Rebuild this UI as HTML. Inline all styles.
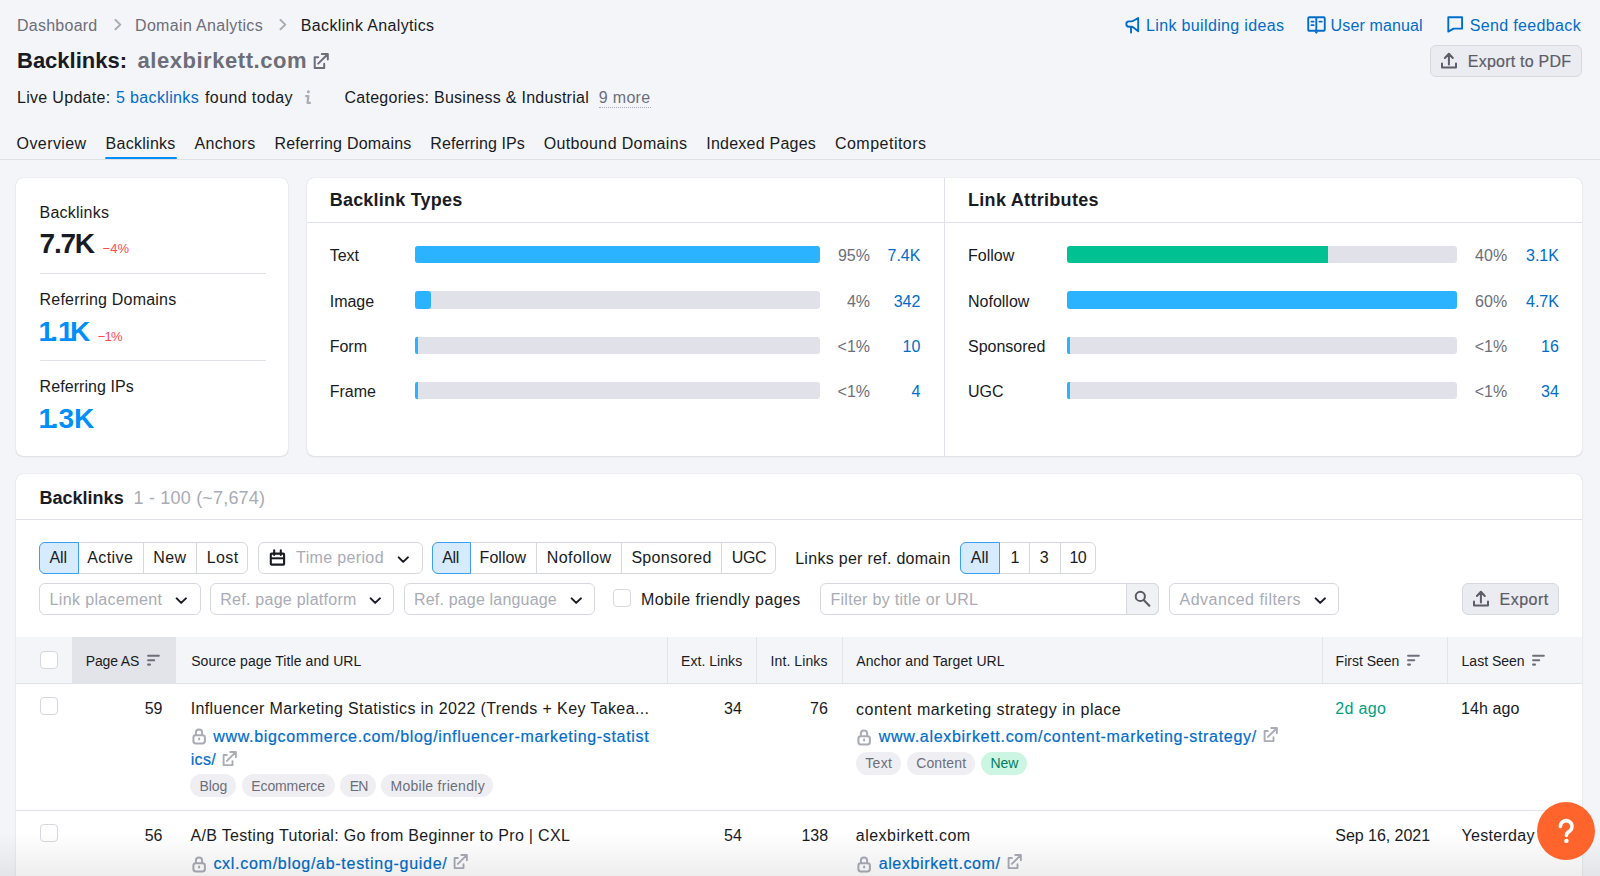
<!DOCTYPE html>
<html><head><meta charset="utf-8"><title>Backlinks: alexbirkett.com</title>
<style>
html,body{margin:0;padding:0;}
body{width:1600px;height:876px;overflow:hidden;position:relative;background:#f4f5f9;font-family:"Liberation Sans",sans-serif;}
.t{position:absolute;white-space:nowrap;}
</style></head><body>
<div style="position:absolute;left:598.5px;top:107px;width:52.5px;height:0px;border-top:1px dotted #a9abb6"></div>
<div style="position:absolute;left:1430px;top:45px;width:152px;height:32px;box-sizing:border-box;background:#ebecf1;border:1px solid #d6d8e0;border-radius:6px"></div>
<div style="position:absolute;left:0px;top:159px;width:1600px;height:1px;background:#dfe0e6"></div>
<div style="position:absolute;left:104.5px;top:157px;width:72px;height:2px;background:#008ff8;border-radius:1px"></div>
<div style="position:absolute;left:16px;top:178px;width:272px;height:278px;background:#fff;border-radius:7px;box-shadow:0 0 1px rgba(25,27,35,0.22),0 1px 2px rgba(25,27,35,0.08)"></div>
<div style="position:absolute;left:39.5px;top:273px;width:226.5px;height:1px;background:#e0e1e9"></div>
<div style="position:absolute;left:39.5px;top:360px;width:226.5px;height:1px;background:#e0e1e9"></div>
<div style="position:absolute;left:307px;top:178px;width:1275px;height:278px;background:#fff;border-radius:7px;box-shadow:0 0 1px rgba(25,27,35,0.22),0 1px 2px rgba(25,27,35,0.08)"></div>
<div style="position:absolute;left:944px;top:178px;width:1px;height:278px;background:#e0e1e9"></div>
<div style="position:absolute;left:307px;top:222px;width:1275px;height:1px;background:#e0e1e9"></div>
<div style="position:absolute;left:415.2px;top:246.0px;width:405.1px;height:17.4px;background:#e0e1e9;border-radius:3px"></div>
<div style="position:absolute;left:415.2px;top:246.0px;width:405.1px;height:17.4px;background:#2bb3ff;border-radius:3px"></div>
<div style="position:absolute;left:415.2px;top:291.33px;width:405.1px;height:17.4px;background:#e0e1e9;border-radius:3px"></div>
<div style="position:absolute;left:415.2px;top:291.33px;width:16.3px;height:17.4px;background:#2bb3ff;border-radius:3px"></div>
<div style="position:absolute;left:415.2px;top:336.66px;width:405.1px;height:17.4px;background:#e0e1e9;border-radius:3px"></div>
<div style="position:absolute;left:415.2px;top:336.66px;width:3px;height:17.4px;background:#2bb3ff;border-radius:2px 0 0 2px"></div>
<div style="position:absolute;left:415.2px;top:381.99px;width:405.1px;height:17.4px;background:#e0e1e9;border-radius:3px"></div>
<div style="position:absolute;left:415.2px;top:381.99px;width:3px;height:17.4px;background:#2bb3ff;border-radius:2px 0 0 2px"></div>
<div style="position:absolute;left:1067px;top:246.0px;width:389.7px;height:17.4px;background:#e0e1e9;border-radius:3px"></div>
<div style="position:absolute;left:1067px;top:246.0px;width:261px;height:17.4px;background:#00c192;border-radius:3px 0 0 3px"></div>
<div style="position:absolute;left:1067px;top:291.33px;width:389.7px;height:17.4px;background:#e0e1e9;border-radius:3px"></div>
<div style="position:absolute;left:1067px;top:291.33px;width:389.7px;height:17.4px;background:#2bb3ff;border-radius:3px"></div>
<div style="position:absolute;left:1067px;top:336.66px;width:389.7px;height:17.4px;background:#e0e1e9;border-radius:3px"></div>
<div style="position:absolute;left:1067px;top:336.66px;width:3px;height:17.4px;background:#2bb3ff;border-radius:2px 0 0 2px"></div>
<div style="position:absolute;left:1067px;top:381.99px;width:389.7px;height:17.4px;background:#e0e1e9;border-radius:3px"></div>
<div style="position:absolute;left:1067px;top:381.99px;width:3px;height:17.4px;background:#2bb3ff;border-radius:2px 0 0 2px"></div>
<div style="position:absolute;left:16px;top:474px;width:1566px;height:500px;background:#fff;border-radius:7px;box-shadow:0 0 1px rgba(25,27,35,0.22),0 1px 2px rgba(25,27,35,0.08)"></div>
<div style="position:absolute;left:16px;top:519px;width:1566px;height:1px;background:#e0e1e9"></div>
<div style="position:absolute;left:39px;top:542px;width:209.3px;height:32px;box-sizing:border-box;border:1px solid #d6d8df;border-radius:6px;background:#fff"></div>
<div style="position:absolute;left:77.6px;top:543px;width:1px;height:30px;background:#d6d8df"></div>
<div style="position:absolute;left:143.4px;top:543px;width:1px;height:30px;background:#d6d8df"></div>
<div style="position:absolute;left:196.3px;top:543px;width:1px;height:30px;background:#d6d8df"></div>
<div style="position:absolute;left:39px;top:542px;width:39.599999999999994px;height:32px;box-sizing:border-box;background:#d7ebfe;border:1px solid #3a9ff5;border-radius:6px 0 0 6px"></div>
<div style="position:absolute;left:258px;top:542px;width:164.5px;height:32px;box-sizing:border-box;border:1px solid #d6d8df;border-radius:6px;background:#fff"></div>
<div style="position:absolute;left:431.5px;top:542px;width:344.79999999999995px;height:32px;box-sizing:border-box;border:1px solid #d6d8df;border-radius:6px;background:#fff"></div>
<div style="position:absolute;left:469.7px;top:543px;width:1px;height:30px;background:#d6d8df"></div>
<div style="position:absolute;left:536.4px;top:543px;width:1px;height:30px;background:#d6d8df"></div>
<div style="position:absolute;left:621.3px;top:543px;width:1px;height:30px;background:#d6d8df"></div>
<div style="position:absolute;left:721.4px;top:543px;width:1px;height:30px;background:#d6d8df"></div>
<div style="position:absolute;left:431.5px;top:542px;width:39.19999999999999px;height:32px;box-sizing:border-box;background:#d7ebfe;border:1px solid #3a9ff5;border-radius:6px 0 0 6px"></div>
<div style="position:absolute;left:960.3px;top:542px;width:136.0px;height:32px;box-sizing:border-box;border:1px solid #d6d8df;border-radius:6px;background:#fff"></div>
<div style="position:absolute;left:998.6px;top:543px;width:1px;height:30px;background:#d6d8df"></div>
<div style="position:absolute;left:1029.3px;top:543px;width:1px;height:30px;background:#d6d8df"></div>
<div style="position:absolute;left:1059.8px;top:543px;width:1px;height:30px;background:#d6d8df"></div>
<div style="position:absolute;left:960.3px;top:542px;width:39.30000000000007px;height:32px;box-sizing:border-box;background:#d7ebfe;border:1px solid #3a9ff5;border-radius:6px 0 0 6px"></div>
<div style="position:absolute;left:39px;top:583px;width:161.5px;height:31.5px;box-sizing:border-box;border:1px solid #d6d8df;border-radius:6px;background:#fff"></div>
<div style="position:absolute;left:209.8px;top:583px;width:184.7px;height:31.5px;box-sizing:border-box;border:1px solid #d6d8df;border-radius:6px;background:#fff"></div>
<div style="position:absolute;left:404.1px;top:583px;width:190.79999999999995px;height:31.5px;box-sizing:border-box;border:1px solid #d6d8df;border-radius:6px;background:#fff"></div>
<div style="position:absolute;left:613px;top:589px;width:18px;height:18px;box-sizing:border-box;border:1px solid #d6d8df;border-radius:4px;background:#fff"></div>
<div style="position:absolute;left:819.9px;top:583px;width:339.4px;height:31.5px;box-sizing:border-box;border:1px solid #d6d8df;border-radius:6px;background:#fff"></div>
<div style="position:absolute;left:1125.9px;top:583px;width:33.4px;height:31.5px;box-sizing:border-box;border:1px solid #d6d8df;border-radius:0 6px 6px 0;background:#f0f1f4"></div>
<div style="position:absolute;left:1169.1px;top:583px;width:169.60000000000014px;height:31.5px;box-sizing:border-box;border:1px solid #d6d8df;border-radius:6px;background:#fff"></div>
<div style="position:absolute;left:1462px;top:583px;width:97.2px;height:31.5px;box-sizing:border-box;background:#ebecf1;border:1px solid #d6d8e0;border-radius:6px"></div>
<div style="position:absolute;left:16px;top:637px;width:1566px;height:46px;background:#f4f5f9"></div>
<div style="position:absolute;left:72px;top:637px;width:104px;height:46px;background:#e3e4ea"></div>
<div style="position:absolute;left:16px;top:683px;width:1566px;height:1px;background:#e0e1e9"></div>
<div style="position:absolute;left:667.3px;top:637px;width:1px;height:46px;background:#e3e4ea"></div>
<div style="position:absolute;left:756.4px;top:637px;width:1px;height:46px;background:#e3e4ea"></div>
<div style="position:absolute;left:842px;top:637px;width:1px;height:46px;background:#e3e4ea"></div>
<div style="position:absolute;left:1321.5px;top:637px;width:1px;height:46px;background:#e3e4ea"></div>
<div style="position:absolute;left:1447.2px;top:637px;width:1px;height:46px;background:#e3e4ea"></div>
<div style="position:absolute;left:39.5px;top:651px;width:18px;height:18px;box-sizing:border-box;border:1px solid #d6d8df;border-radius:4px;background:#fff"></div>
<div style="position:absolute;left:39.5px;top:697px;width:18px;height:18px;box-sizing:border-box;border:1px solid #d6d8df;border-radius:4px;background:#fff"></div>
<div style="position:absolute;left:190.1px;top:774.1px;width:46.099999999999994px;height:23px;background:#efeff3;border-radius:11.5px"></div>
<div style="position:absolute;left:241.8px;top:774.1px;width:92.80000000000001px;height:23px;background:#efeff3;border-radius:11.5px"></div>
<div style="position:absolute;left:340.3px;top:774.1px;width:35.69999999999999px;height:23px;background:#efeff3;border-radius:11.5px"></div>
<div style="position:absolute;left:381px;top:774.1px;width:112.39999999999998px;height:23px;background:#efeff3;border-radius:11.5px"></div>
<div style="position:absolute;left:855.8px;top:751.9px;width:45.40000000000009px;height:23px;background:#efeff3;border-radius:11.5px"></div>
<div style="position:absolute;left:906.7px;top:751.9px;width:68.69999999999993px;height:23px;background:#efeff3;border-radius:11.5px"></div>
<div style="position:absolute;left:980.9px;top:751.9px;width:46.30000000000007px;height:23px;background:#cdf6e2;border-radius:11.5px"></div>
<div style="position:absolute;left:16px;top:810px;width:1566px;height:1px;background:#e0e1e9"></div>
<div style="position:absolute;left:39.5px;top:824px;width:18px;height:18px;box-sizing:border-box;border:1px solid #d6d8df;border-radius:4px;background:#fff"></div>
<svg style="position:absolute;left:113.5px;top:19px" width="8" height="12" viewBox="0 0 8 12" fill="none"><path d="M1.5 1 L6.3 5.6 L1.5 10.3" stroke="#a9abb6" stroke-width="2" stroke-linecap="round" stroke-linejoin="round"/></svg>
<svg style="position:absolute;left:279px;top:19px" width="8" height="12" viewBox="0 0 8 12" fill="none"><path d="M1.5 1 L6.3 5.6 L1.5 10.3" stroke="#a9abb6" stroke-width="2" stroke-linecap="round" stroke-linejoin="round"/></svg>
<svg style="position:absolute;left:313px;top:53px" width="16" height="16" viewBox="0 0 16 16" fill="none"><path d="M5.2 4.2 H1.7 V15 H11.2 V10.8" stroke="#6c6e79" stroke-width="2" stroke-linecap="round" stroke-linejoin="round"/><path d="M8.8 1 H14.8 V6.6 M14.6 1.2 L5.2 10.6" stroke="#6c6e79" stroke-width="2" stroke-linecap="round" stroke-linejoin="round"/></svg>
<svg style="position:absolute;left:303px;top:89px" width="10" height="16" viewBox="0 0 10 16" fill="none"><circle cx="5.4" cy="2.7" r="1.5" fill="#a9abb6"/><path d="M2.2 7.1 H5.4 L4.5 13.9 H7.8" stroke="#a9abb6" stroke-width="2.2" stroke-linejoin="round"/></svg>
<svg style="position:absolute;left:1124px;top:16px" width="16" height="18" viewBox="0 0 16 18" fill="none"><path d="M14.2 2 V15.2 L9.4 11.6 Q8.6 10.7 7.6 10.7 H4.95 A2.65 2.65 0 0 1 4.95 5.4 H7.6 Q8.6 5.4 9.4 4.8 Z" stroke="#006dca" stroke-width="1.9" stroke-linejoin="round"/><path d="M6.9 11.2 L7.1 16.6" stroke="#006dca" stroke-width="1.9" stroke-linecap="round"/></svg>
<svg style="position:absolute;left:1307px;top:16px" width="19" height="19" viewBox="0 0 19 19" fill="none"><rect x="1.25" y="1.25" width="16.5" height="13.5" rx="1" stroke="#006dca" stroke-width="1.9"/><path d="M9.3 1.25 V14.75" stroke="#006dca" stroke-width="1.9"/><path d="M7.3 15.5 L9.3 17.9 L11.3 15.5 Z" fill="#006dca"/><path d="M4.4 5.6 H6.7 M4.4 9.2 H6.7 M12.4 5.6 H14.8" stroke="#006dca" stroke-width="1.8" stroke-linecap="round"/></svg>
<svg style="position:absolute;left:1447px;top:16px" width="17" height="18" viewBox="0 0 17 18" fill="none"><path d="M1.3 15.6 V1.3 H15.1 V12.6 H6.5 Z" stroke="#006dca" stroke-width="1.9" stroke-linejoin="round"/></svg>
<svg style="position:absolute;left:1440px;top:52px" width="17" height="17" viewBox="0 0 17 17" fill="none"><path d="M8.9 12.4 V2 M4.9 6 L8.9 1.8 L12.8 6" stroke="#5b5d68" stroke-width="2" stroke-linecap="round" stroke-linejoin="round"/><path d="M2 11.6 V15.4 H16 V11.6" stroke="#5b5d68" stroke-width="2" stroke-linecap="round" stroke-linejoin="round"/></svg>
<svg style="position:absolute;left:269px;top:549px" width="17" height="17" viewBox="0 0 17 17" fill="none"><rect x="1.8" y="4.6" width="13.3" height="11" rx="0.8" stroke="#191b23" stroke-width="2.1"/><path d="M1.8 9.3 H15.1" stroke="#191b23" stroke-width="2"/><path d="M5.2 1.4 V6 M11.8 1.4 V6" stroke="#191b23" stroke-width="2.1" stroke-linecap="round"/></svg>
<svg style="position:absolute;left:397px;top:555.5px" width="12" height="8" viewBox="0 0 12 8" fill="none"><path d="M1.7 1.4 L6.2 5.9 L10.9 1.4" stroke="#191b23" stroke-width="2" stroke-linecap="round" stroke-linejoin="round"/></svg>
<svg style="position:absolute;left:175.3px;top:596.5px" width="12" height="8" viewBox="0 0 12 8" fill="none"><path d="M1.7 1.4 L6.2 5.9 L10.9 1.4" stroke="#191b23" stroke-width="2" stroke-linecap="round" stroke-linejoin="round"/></svg>
<svg style="position:absolute;left:369.3px;top:596.5px" width="12" height="8" viewBox="0 0 12 8" fill="none"><path d="M1.7 1.4 L6.2 5.9 L10.9 1.4" stroke="#191b23" stroke-width="2" stroke-linecap="round" stroke-linejoin="round"/></svg>
<svg style="position:absolute;left:569.6px;top:596.5px" width="12" height="8" viewBox="0 0 12 8" fill="none"><path d="M1.7 1.4 L6.2 5.9 L10.9 1.4" stroke="#191b23" stroke-width="2" stroke-linecap="round" stroke-linejoin="round"/></svg>
<svg style="position:absolute;left:1133px;top:589px" width="18" height="18" viewBox="0 0 18 18" fill="none"><circle cx="7.3" cy="7.4" r="4.6" stroke="#575963" stroke-width="2"/><path d="M10.7 11 L16.3 16.7" stroke="#575963" stroke-width="2.1" stroke-linecap="round"/></svg>
<svg style="position:absolute;left:1314.0px;top:596.5px" width="12" height="8" viewBox="0 0 12 8" fill="none"><path d="M1.7 1.4 L6.2 5.9 L10.9 1.4" stroke="#191b23" stroke-width="2" stroke-linecap="round" stroke-linejoin="round"/></svg>
<svg style="position:absolute;left:1472px;top:590px" width="17" height="17" viewBox="0 0 17 17" fill="none"><path d="M8.9 12.4 V2 M4.9 6 L8.9 1.8 L12.8 6" stroke="#5b5d68" stroke-width="2" stroke-linecap="round" stroke-linejoin="round"/><path d="M2 11.6 V15.4 H16 V11.6" stroke="#5b5d68" stroke-width="2" stroke-linecap="round" stroke-linejoin="round"/></svg>
<svg style="position:absolute;left:146px;top:653px" width="15" height="14" viewBox="0 0 15 14" fill="none"><path d="M2.1 2.7 H12.8 M2.1 7.2 H8.2 M2.1 11.6 H4" stroke="#6c6e79" stroke-width="2.1" stroke-linecap="round"/></svg>
<svg style="position:absolute;left:1405.5px;top:653px" width="15" height="14" viewBox="0 0 15 14" fill="none"><path d="M2.1 2.7 H12.8 M2.1 7.2 H8.2 M2.1 11.6 H4" stroke="#6c6e79" stroke-width="2.1" stroke-linecap="round"/></svg>
<svg style="position:absolute;left:1530.6px;top:653px" width="15" height="14" viewBox="0 0 15 14" fill="none"><path d="M2.1 2.7 H12.8 M2.1 7.2 H8.2 M2.1 11.6 H4" stroke="#6c6e79" stroke-width="2.1" stroke-linecap="round"/></svg>
<svg style="position:absolute;left:191.5px;top:728px" width="14" height="17" viewBox="0 0 14 17" fill="none"><rect x="1.4" y="7.3" width="11.5" height="8.2" rx="2.4" stroke="#a9abb6" stroke-width="2"/><path d="M3.9 7.3 V4.6 A3.1 3.1 0 0 1 10.1 4.6 V7.3" stroke="#a9abb6" stroke-width="2"/><path d="M7.1 10.6 V11.6" stroke="#a9abb6" stroke-width="2" stroke-linecap="round"/></svg>
<svg style="position:absolute;left:221.5px;top:750.6px" width="15" height="15" viewBox="0 0 16 16" fill="none"><path d="M5.2 4.2 H1.7 V15 H11.2 V10.8" stroke="#a9abb6" stroke-width="2" stroke-linecap="round" stroke-linejoin="round"/><path d="M8.8 1 H14.8 V6.6 M14.6 1.2 L5.2 10.6" stroke="#a9abb6" stroke-width="2" stroke-linecap="round" stroke-linejoin="round"/></svg>
<svg style="position:absolute;left:857.2px;top:729px" width="14" height="17" viewBox="0 0 14 17" fill="none"><rect x="1.4" y="7.3" width="11.5" height="8.2" rx="2.4" stroke="#a9abb6" stroke-width="2"/><path d="M3.9 7.3 V4.6 A3.1 3.1 0 0 1 10.1 4.6 V7.3" stroke="#a9abb6" stroke-width="2"/><path d="M7.1 10.6 V11.6" stroke="#a9abb6" stroke-width="2" stroke-linecap="round"/></svg>
<svg style="position:absolute;left:1263px;top:727px" width="15" height="15" viewBox="0 0 16 16" fill="none"><path d="M5.2 4.2 H1.7 V15 H11.2 V10.8" stroke="#a9abb6" stroke-width="2" stroke-linecap="round" stroke-linejoin="round"/><path d="M8.8 1 H14.8 V6.6 M14.6 1.2 L5.2 10.6" stroke="#a9abb6" stroke-width="2" stroke-linecap="round" stroke-linejoin="round"/></svg>
<svg style="position:absolute;left:191.5px;top:856px" width="14" height="17" viewBox="0 0 14 17" fill="none"><rect x="1.4" y="7.3" width="11.5" height="8.2" rx="2.4" stroke="#a9abb6" stroke-width="2"/><path d="M3.9 7.3 V4.6 A3.1 3.1 0 0 1 10.1 4.6 V7.3" stroke="#a9abb6" stroke-width="2"/><path d="M7.1 10.6 V11.6" stroke="#a9abb6" stroke-width="2" stroke-linecap="round"/></svg>
<svg style="position:absolute;left:453.2px;top:853.6px" width="15" height="15" viewBox="0 0 16 16" fill="none"><path d="M5.2 4.2 H1.7 V15 H11.2 V10.8" stroke="#a9abb6" stroke-width="2" stroke-linecap="round" stroke-linejoin="round"/><path d="M8.8 1 H14.8 V6.6 M14.6 1.2 L5.2 10.6" stroke="#a9abb6" stroke-width="2" stroke-linecap="round" stroke-linejoin="round"/></svg>
<svg style="position:absolute;left:857.2px;top:856px" width="14" height="17" viewBox="0 0 14 17" fill="none"><rect x="1.4" y="7.3" width="11.5" height="8.2" rx="2.4" stroke="#a9abb6" stroke-width="2"/><path d="M3.9 7.3 V4.6 A3.1 3.1 0 0 1 10.1 4.6 V7.3" stroke="#a9abb6" stroke-width="2"/><path d="M7.1 10.6 V11.6" stroke="#a9abb6" stroke-width="2" stroke-linecap="round"/></svg>
<svg style="position:absolute;left:1006.5px;top:853.6px" width="15" height="15" viewBox="0 0 16 16" fill="none"><path d="M5.2 4.2 H1.7 V15 H11.2 V10.8" stroke="#a9abb6" stroke-width="2" stroke-linecap="round" stroke-linejoin="round"/><path d="M8.8 1 H14.8 V6.6 M14.6 1.2 L5.2 10.6" stroke="#a9abb6" stroke-width="2" stroke-linecap="round" stroke-linejoin="round"/></svg>
<div id="t0" class="t" style="top:17.50px;font-size:16px;line-height:16px;font-weight:400;color:#6c6e79;left:17.00px;letter-spacing:0.247px;">Dashboard</div>
<div id="t1" class="t" style="top:17.50px;font-size:16px;line-height:16px;font-weight:400;color:#6c6e79;left:135.00px;letter-spacing:0.330px;">Domain Analytics</div>
<div id="t2" class="t" style="top:17.50px;font-size:16px;line-height:16px;font-weight:400;color:#191b23;left:300.75px;letter-spacing:0.365px;">Backlink Analytics</div>
<div id="t3" class="t" style="top:50.00px;font-size:22px;line-height:22px;font-weight:700;color:#191b23;left:17.00px;letter-spacing:-0.006px;">Backlinks:</div>
<div id="t4" class="t" style="top:50.00px;font-size:22px;line-height:22px;font-weight:700;color:#6c6e79;left:137.50px;letter-spacing:0.540px;">alexbirkett.com</div>
<div id="t5" class="t" style="top:89.50px;font-size:16px;line-height:16px;font-weight:400;color:#191b23;left:17.00px;letter-spacing:0.305px;">Live Update:</div>
<div id="t6" class="t" style="top:89.50px;font-size:16px;line-height:16px;font-weight:400;color:#006dca;left:116.00px;letter-spacing:0.349px;">5 backlinks</div>
<div id="t7" class="t" style="top:89.50px;font-size:16px;line-height:16px;font-weight:400;color:#191b23;left:205.00px;letter-spacing:0.398px;">found today</div>
<div id="t8" class="t" style="top:89.50px;font-size:16px;line-height:16px;font-weight:400;color:#191b23;left:344.50px;letter-spacing:0.268px;">Categories: Business &amp; Industrial</div>
<div id="t9" class="t" style="top:89.50px;font-size:16px;line-height:16px;font-weight:400;color:#6c6e79;left:598.75px;letter-spacing:0.326px;">9 more</div>
<div id="t10" class="t" style="top:17.60px;font-size:16px;line-height:16px;font-weight:400;color:#006dca;left:1146.00px;letter-spacing:0.355px;">Link building ideas</div>
<div id="t11" class="t" style="top:17.60px;font-size:16px;line-height:16px;font-weight:400;color:#006dca;left:1330.60px;letter-spacing:0.136px;">User manual</div>
<div id="t12" class="t" style="top:17.60px;font-size:16px;line-height:16px;font-weight:400;color:#006dca;left:1469.70px;letter-spacing:0.350px;">Send feedback</div>
<div id="t13" class="t" style="top:53.80px;font-size:16px;line-height:16px;font-weight:400;color:#5b5d68;left:1467.80px;letter-spacing:0.224px;-webkit-text-stroke:0.2px currentColor;">Export to PDF</div>
<div id="t14" class="t" style="top:135.75px;font-size:16px;line-height:16px;font-weight:400;color:#191b23;left:16.60px;letter-spacing:0.414px;">Overview</div>
<div id="t15" class="t" style="top:135.75px;font-size:16px;line-height:16px;font-weight:400;color:#191b23;left:105.60px;letter-spacing:0.269px;">Backlinks</div>
<div id="t16" class="t" style="top:135.75px;font-size:16px;line-height:16px;font-weight:400;color:#191b23;left:194.40px;letter-spacing:0.357px;">Anchors</div>
<div id="t17" class="t" style="top:135.75px;font-size:16px;line-height:16px;font-weight:400;color:#191b23;left:274.40px;letter-spacing:0.224px;">Referring Domains</div>
<div id="t18" class="t" style="top:135.75px;font-size:16px;line-height:16px;font-weight:400;color:#191b23;left:430.30px;letter-spacing:0.087px;">Referring IPs</div>
<div id="t19" class="t" style="top:135.75px;font-size:16px;line-height:16px;font-weight:400;color:#191b23;left:543.70px;letter-spacing:0.365px;">Outbound Domains</div>
<div id="t20" class="t" style="top:135.75px;font-size:16px;line-height:16px;font-weight:400;color:#191b23;left:706.30px;letter-spacing:0.227px;">Indexed Pages</div>
<div id="t21" class="t" style="top:135.75px;font-size:16px;line-height:16px;font-weight:400;color:#191b23;left:834.90px;letter-spacing:0.495px;">Competitors</div>
<div id="t22" class="t" style="top:204.70px;font-size:16px;line-height:16px;font-weight:400;color:#191b23;left:39.60px;letter-spacing:0.225px;">Backlinks</div>
<div id="t23" class="t" style="top:230.20px;font-size:28px;line-height:28px;font-weight:700;color:#191b23;left:39.60px;letter-spacing:-1.239px;">7.7K</div>
<div id="t24" class="t" style="top:242.00px;font-size:13px;line-height:13px;font-weight:400;color:#ff4953;left:102.40px;letter-spacing:0.170px;">−4%</div>
<div id="t25" class="t" style="top:291.60px;font-size:16px;line-height:16px;font-weight:400;color:#191b23;left:39.60px;letter-spacing:0.201px;">Referring Domains</div>
<div id="t26" class="t" style="top:318.00px;font-size:28px;line-height:28px;font-weight:700;color:#008ff8;left:38.60px;"><span style="letter-spacing:-4px">1</span>.<span style="letter-spacing:-3.5px">1</span>K</div>
<div id="t27" class="t" style="top:330.00px;font-size:13px;line-height:13px;font-weight:400;color:#ff4953;left:97.80px;letter-spacing:-0.864px;">−1%</div>
<div id="t28" class="t" style="top:378.80px;font-size:16px;line-height:16px;font-weight:400;color:#191b23;left:39.60px;letter-spacing:0.071px;">Referring IPs</div>
<div id="t29" class="t" style="top:405.20px;font-size:28px;line-height:28px;font-weight:700;color:#008ff8;left:38.60px;"><span style="letter-spacing:-3.5px">1</span>.3K</div>
<div id="t30" class="t" style="top:191.00px;font-size:18px;line-height:18px;font-weight:700;color:#191b23;left:329.70px;letter-spacing:0.219px;">Backlink Types</div>
<div id="t31" class="t" style="top:191.00px;font-size:18px;line-height:18px;font-weight:700;color:#191b23;left:968.00px;letter-spacing:0.297px;">Link Attributes</div>
<div id="t32" class="t" style="top:248.30px;font-size:16px;line-height:16px;font-weight:400;color:#191b23;left:329.70px;">Text</div>
<div id="t33" class="t" style="top:248.30px;font-size:16px;line-height:16px;font-weight:400;color:#6c6e79;right:730.00px;">95%</div>
<div id="t34" class="t" style="top:248.30px;font-size:16px;line-height:16px;font-weight:400;color:#006dca;right:679.60px;">7.4K</div>
<div id="t35" class="t" style="top:293.63px;font-size:16px;line-height:16px;font-weight:400;color:#191b23;left:329.70px;">Image</div>
<div id="t36" class="t" style="top:293.63px;font-size:16px;line-height:16px;font-weight:400;color:#6c6e79;right:730.00px;">4%</div>
<div id="t37" class="t" style="top:293.63px;font-size:16px;line-height:16px;font-weight:400;color:#006dca;right:679.60px;">342</div>
<div id="t38" class="t" style="top:338.96px;font-size:16px;line-height:16px;font-weight:400;color:#191b23;left:329.70px;">Form</div>
<div id="t39" class="t" style="top:338.96px;font-size:16px;line-height:16px;font-weight:400;color:#6c6e79;right:730.00px;">&lt;1%</div>
<div id="t40" class="t" style="top:338.96px;font-size:16px;line-height:16px;font-weight:400;color:#006dca;right:679.60px;">10</div>
<div id="t41" class="t" style="top:384.29px;font-size:16px;line-height:16px;font-weight:400;color:#191b23;left:329.70px;">Frame</div>
<div id="t42" class="t" style="top:384.29px;font-size:16px;line-height:16px;font-weight:400;color:#6c6e79;right:730.00px;">&lt;1%</div>
<div id="t43" class="t" style="top:384.29px;font-size:16px;line-height:16px;font-weight:400;color:#006dca;right:679.60px;">4</div>
<div id="t44" class="t" style="top:248.30px;font-size:16px;line-height:16px;font-weight:400;color:#191b23;left:968.00px;">Follow</div>
<div id="t45" class="t" style="top:248.30px;font-size:16px;line-height:16px;font-weight:400;color:#6c6e79;right:92.90px;">40%</div>
<div id="t46" class="t" style="top:248.30px;font-size:16px;line-height:16px;font-weight:400;color:#006dca;right:41.10px;">3.1K</div>
<div id="t47" class="t" style="top:293.63px;font-size:16px;line-height:16px;font-weight:400;color:#191b23;left:968.00px;">Nofollow</div>
<div id="t48" class="t" style="top:293.63px;font-size:16px;line-height:16px;font-weight:400;color:#6c6e79;right:92.90px;">60%</div>
<div id="t49" class="t" style="top:293.63px;font-size:16px;line-height:16px;font-weight:400;color:#006dca;right:41.10px;">4.7K</div>
<div id="t50" class="t" style="top:338.96px;font-size:16px;line-height:16px;font-weight:400;color:#191b23;left:968.00px;">Sponsored</div>
<div id="t51" class="t" style="top:338.96px;font-size:16px;line-height:16px;font-weight:400;color:#6c6e79;right:92.90px;">&lt;1%</div>
<div id="t52" class="t" style="top:338.96px;font-size:16px;line-height:16px;font-weight:400;color:#006dca;right:41.10px;">16</div>
<div id="t53" class="t" style="top:384.29px;font-size:16px;line-height:16px;font-weight:400;color:#191b23;left:968.00px;">UGC</div>
<div id="t54" class="t" style="top:384.29px;font-size:16px;line-height:16px;font-weight:400;color:#6c6e79;right:92.90px;">&lt;1%</div>
<div id="t55" class="t" style="top:384.29px;font-size:16px;line-height:16px;font-weight:400;color:#006dca;right:41.10px;">34</div>
<div id="t56" class="t" style="top:488.60px;font-size:18px;line-height:18px;font-weight:700;color:#191b23;left:39.40px;letter-spacing:0.026px;">Backlinks</div>
<div id="t57" class="t" style="top:488.60px;font-size:18px;line-height:18px;font-weight:400;color:#a9abb6;left:133.60px;letter-spacing:0.188px;">1 - 100 (~7,674)</div>
<div id="t58" class="t" style="top:550.00px;font-size:16px;line-height:16px;font-weight:400;color:#191b23;left:49.50px;letter-spacing:-0.094px;">All</div>
<div id="t59" class="t" style="top:550.00px;font-size:16px;line-height:16px;font-weight:400;color:#191b23;left:87.20px;letter-spacing:0.420px;">Active</div>
<div id="t60" class="t" style="top:550.00px;font-size:16px;line-height:16px;font-weight:400;color:#191b23;left:153.30px;letter-spacing:0.361px;">New</div>
<div id="t61" class="t" style="top:550.00px;font-size:16px;line-height:16px;font-weight:400;color:#191b23;left:206.70px;letter-spacing:0.388px;">Lost</div>
<div id="t62" class="t" style="top:550.00px;font-size:16px;line-height:16px;font-weight:400;color:#a9abb6;left:296.10px;letter-spacing:0.355px;">Time period</div>
<div id="t63" class="t" style="top:550.00px;font-size:16px;line-height:16px;font-weight:400;color:#191b23;left:442.20px;letter-spacing:-0.327px;">All</div>
<div id="t64" class="t" style="top:550.00px;font-size:16px;line-height:16px;font-weight:400;color:#191b23;left:479.60px;letter-spacing:0.028px;">Follow</div>
<div id="t65" class="t" style="top:550.00px;font-size:16px;line-height:16px;font-weight:400;color:#191b23;left:546.80px;letter-spacing:0.418px;">Nofollow</div>
<div id="t66" class="t" style="top:550.00px;font-size:16px;line-height:16px;font-weight:400;color:#191b23;left:631.40px;letter-spacing:0.312px;">Sponsored</div>
<div id="t67" class="t" style="top:550.00px;font-size:16px;line-height:16px;font-weight:400;color:#191b23;left:731.80px;letter-spacing:-0.421px;">UGC</div>
<div id="t68" class="t" style="top:550.50px;font-size:16px;line-height:16px;font-weight:400;color:#191b23;left:795.20px;letter-spacing:0.285px;">Links per ref. domain</div>
<div id="t69" class="t" style="top:550.00px;font-size:16px;line-height:16px;font-weight:400;color:#191b23;left:970.80px;letter-spacing:0.040px;">All</div>
<div id="t70" class="t" style="top:550.00px;font-size:16px;line-height:16px;font-weight:400;color:#191b23;left:1010.40px;">1</div>
<div id="t71" class="t" style="top:550.00px;font-size:16px;line-height:16px;font-weight:400;color:#191b23;left:1039.80px;">3</div>
<div id="t72" class="t" style="top:550.00px;font-size:16px;line-height:16px;font-weight:400;color:#191b23;left:1069.50px;letter-spacing:-0.648px;">10</div>
<div id="t73" class="t" style="top:591.80px;font-size:16px;line-height:16px;font-weight:400;color:#a9abb6;left:49.50px;letter-spacing:0.370px;">Link placement</div>
<div id="t74" class="t" style="top:591.80px;font-size:16px;line-height:16px;font-weight:400;color:#a9abb6;left:220.20px;letter-spacing:0.265px;">Ref. page platform</div>
<div id="t75" class="t" style="top:591.80px;font-size:16px;line-height:16px;font-weight:400;color:#a9abb6;left:414.00px;letter-spacing:0.179px;">Ref. page language</div>
<div id="t76" class="t" style="top:591.80px;font-size:16px;line-height:16px;font-weight:400;color:#191b23;left:641.00px;letter-spacing:0.405px;">Mobile friendly pages</div>
<div id="t77" class="t" style="top:591.80px;font-size:16px;line-height:16px;font-weight:400;color:#a9abb6;left:830.40px;letter-spacing:0.292px;">Filter by title or URL</div>
<div id="t78" class="t" style="top:591.80px;font-size:16px;line-height:16px;font-weight:400;color:#a9abb6;left:1179.50px;letter-spacing:0.479px;">Advanced filters</div>
<div id="t79" class="t" style="top:591.80px;font-size:16px;line-height:16px;font-weight:400;color:#5b5d68;left:1499.50px;letter-spacing:0.508px;-webkit-text-stroke:0.2px currentColor;">Export</div>
<div id="t80" class="t" style="top:653.60px;font-size:14px;line-height:14px;font-weight:400;color:#191b23;left:85.80px;letter-spacing:-0.157px;">Page AS</div>
<div id="t81" class="t" style="top:653.60px;font-size:14px;line-height:14px;font-weight:400;color:#191b23;left:191.20px;letter-spacing:0.084px;">Source page Title and URL</div>
<div id="t82" class="t" style="top:653.60px;font-size:14px;line-height:14px;font-weight:400;color:#191b23;left:681.00px;letter-spacing:0.050px;">Ext. Links</div>
<div id="t83" class="t" style="top:653.60px;font-size:14px;line-height:14px;font-weight:400;color:#191b23;left:770.60px;letter-spacing:0.087px;">Int. Links</div>
<div id="t84" class="t" style="top:653.60px;font-size:14px;line-height:14px;font-weight:400;color:#191b23;left:856.25px;letter-spacing:0.116px;">Anchor and Target URL</div>
<div id="t85" class="t" style="top:653.60px;font-size:14px;line-height:14px;font-weight:400;color:#191b23;left:1335.60px;letter-spacing:-0.001px;">First Seen</div>
<div id="t86" class="t" style="top:653.60px;font-size:14px;line-height:14px;font-weight:400;color:#191b23;left:1461.60px;letter-spacing:-0.007px;">Last Seen</div>
<div id="t87" class="t" style="top:701.20px;font-size:16px;line-height:16px;font-weight:400;color:#191b23;right:1437.50px;">59</div>
<div id="t88" class="t" style="top:701.20px;font-size:16px;line-height:16px;font-weight:400;color:#191b23;left:190.70px;letter-spacing:0.377px;">Influencer Marketing Statistics in 2022 (Trends + Key Takea...</div>
<div id="t89" class="t" style="top:729.30px;font-size:16px;line-height:16px;font-weight:400;color:#006dca;left:213.20px;letter-spacing:0.680px;-webkit-text-stroke:0.2px currentColor;">www.bigcommerce.com/blog/influencer-marketing-statist</div>
<div id="t90" class="t" style="top:751.80px;font-size:16px;line-height:16px;font-weight:400;color:#006dca;left:190.70px;letter-spacing:0.325px;-webkit-text-stroke:0.2px currentColor;">ics/</div>
<div id="t91" class="t" style="top:778.60px;font-size:14px;line-height:14px;font-weight:400;color:#6c6e79;left:199.60px;letter-spacing:-0.133px;">Blog</div>
<div id="t92" class="t" style="top:778.60px;font-size:14px;line-height:14px;font-weight:400;color:#6c6e79;left:251.30px;letter-spacing:-0.121px;">Ecommerce</div>
<div id="t93" class="t" style="top:778.60px;font-size:14px;line-height:14px;font-weight:400;color:#6c6e79;left:349.80px;letter-spacing:-0.927px;">EN</div>
<div id="t94" class="t" style="top:778.60px;font-size:14px;line-height:14px;font-weight:400;color:#6c6e79;left:390.50px;letter-spacing:0.276px;">Mobile friendly</div>
<div id="t95" class="t" style="top:701.20px;font-size:16px;line-height:16px;font-weight:400;color:#191b23;right:858.10px;">34</div>
<div id="t96" class="t" style="top:701.20px;font-size:16px;line-height:16px;font-weight:400;color:#191b23;right:772.20px;">76</div>
<div id="t97" class="t" style="top:701.50px;font-size:16px;line-height:16px;font-weight:400;color:#191b23;left:856.10px;letter-spacing:0.485px;">content marketing strategy in place</div>
<div id="t98" class="t" style="top:729.30px;font-size:16px;line-height:16px;font-weight:400;color:#006dca;left:878.80px;letter-spacing:0.704px;-webkit-text-stroke:0.2px currentColor;">www.alexbirkett.com/content-marketing-strategy/</div>
<div id="t99" class="t" style="top:756.40px;font-size:14px;line-height:14px;font-weight:400;color:#6c6e79;left:865.30px;letter-spacing:0.328px;">Text</div>
<div id="t100" class="t" style="top:756.40px;font-size:14px;line-height:14px;font-weight:400;color:#6c6e79;left:916.20px;letter-spacing:0.136px;">Content</div>
<div id="t101" class="t" style="top:756.40px;font-size:14px;line-height:14px;font-weight:400;color:#007c65;left:990.40px;letter-spacing:-0.005px;">New</div>
<div id="t102" class="t" style="top:701.20px;font-size:16px;line-height:16px;font-weight:400;color:#009f81;left:1335.30px;letter-spacing:0.344px;">2d ago</div>
<div id="t103" class="t" style="top:701.20px;font-size:16px;line-height:16px;font-weight:400;color:#191b23;left:1461.10px;letter-spacing:0.079px;">14h ago</div>
<div id="t104" class="t" style="top:828.00px;font-size:16px;line-height:16px;font-weight:400;color:#191b23;right:1437.50px;">56</div>
<div id="t105" class="t" style="top:828.00px;font-size:16px;line-height:16px;font-weight:400;color:#191b23;left:190.60px;letter-spacing:0.303px;">A/B Testing Tutorial: Go from Beginner to Pro | CXL</div>
<div id="t106" class="t" style="top:855.75px;font-size:16px;line-height:16px;font-weight:400;color:#006dca;left:213.40px;letter-spacing:0.718px;-webkit-text-stroke:0.2px currentColor;">cxl.com/blog/ab-testing-guide/</div>
<div id="t107" class="t" style="top:828.00px;font-size:16px;line-height:16px;font-weight:400;color:#191b23;right:858.20px;">54</div>
<div id="t108" class="t" style="top:828.00px;font-size:16px;line-height:16px;font-weight:400;color:#191b23;right:771.90px;">138</div>
<div id="t109" class="t" style="top:828.00px;font-size:16px;line-height:16px;font-weight:400;color:#191b23;left:855.80px;letter-spacing:0.480px;">alexbirkett.com</div>
<div id="t110" class="t" style="top:855.75px;font-size:16px;line-height:16px;font-weight:400;color:#006dca;left:878.70px;letter-spacing:0.616px;-webkit-text-stroke:0.2px currentColor;">alexbirkett.com/</div>
<div id="t111" class="t" style="top:828.00px;font-size:16px;line-height:16px;font-weight:400;color:#191b23;left:1335.30px;letter-spacing:-0.042px;">Sep 16, 2021</div>
<div id="t112" class="t" style="top:828.00px;font-size:16px;line-height:16px;font-weight:400;color:#191b23;left:1461.60px;letter-spacing:0.291px;">Yesterday</div>
<div style="position:absolute;left:0;top:832px;width:1600px;height:44px;background:linear-gradient(rgba(0,0,10,0),rgba(0,0,10,0.065))"></div>
<div style="position:absolute;left:1537px;top:802px;width:58px;height:58px;border-radius:50%;background:#ff642d"></div>
<svg style="position:absolute;left:1537px;top:802px" width="58" height="58" viewBox="0 0 58 58" fill="none"><path d="M23.4 24.6 A5.8 5.8 0 1 1 32.3 29.4 Q29.4 31 29.4 33.6" stroke="#fff" stroke-width="3.5" stroke-linecap="round"/><circle cx="29.4" cy="38.9" r="2.2" fill="#fff"/></svg>
</body></html>
